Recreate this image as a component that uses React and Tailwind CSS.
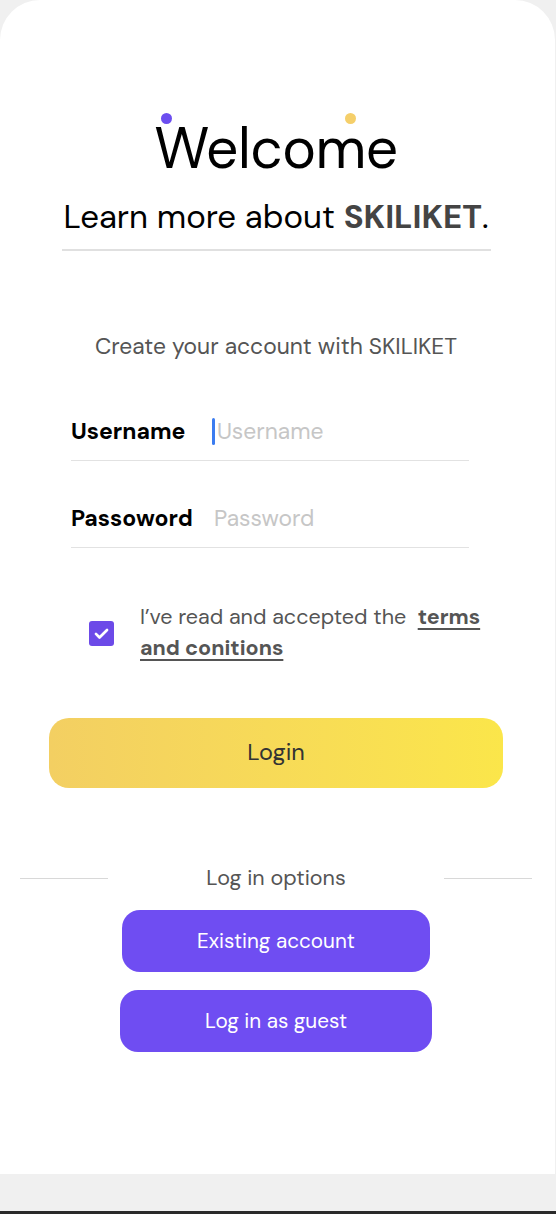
import { useState } from 'react'

const font = { fontFamily: '"DM Sans", Inter, "Noto Sans", sans-serif' }

function Field({ label, placeholder, type = 'text', caret = false, labelWidth }) {
  return (
    <div className="flex items-center border-b border-[#e2e2e2] pt-[43px] pb-[15px]">
      <span className={`${labelWidth} text-[23px] font-bold leading-[28px] text-black`}>{label}</span>
      <div className="flex flex-1 items-center">
        {caret && <span className="mr-[2px] h-[27px] w-[3px] rounded-sm bg-[#3b7cf0]"></span>}
        <input
          type={type}
          placeholder={placeholder}
          className="w-full bg-transparent text-[22.8px] leading-[28px] text-[#333] placeholder:text-[#c6c6c6] focus:outline-none"
        />
      </div>
    </div>
  )
}

export default function App() {
  const [accepted, setAccepted] = useState(true)

  return (
    <div className="flex h-[1214px] w-full flex-col bg-[#f0f0f0]" style={font}>
      <div className="flex h-[1174px] w-[555px] flex-col items-center rounded-t-[40px] bg-white pr-[3px]">
        {/* Title */}
        <div className="relative mt-[113px]">
          <span className="absolute left-[7px] top-[0px] h-[11px] w-[11px] rounded-full bg-[#6c4ef0]"></span>
          <span className="absolute left-[191px] top-[0px] h-[11px] w-[11px] rounded-full bg-[#f5cf6a]"></span>
          <h1 className="pt-[5px] text-[57px] font-normal leading-[62px] tracking-[-0.5px] text-black">Welcome</h1>
        </div>
        <p className="mt-[17px] text-[33px] leading-[40px] text-black">
          Learn more about <span className="font-bold text-[#444]">SKILIKET</span>.
        </p>
        <div className="mt-[12px] h-[2px] w-[429px] bg-[#e0e0e0]"></div>

        {/* Form */}
        <p className="mt-[81px] text-[22.8px] leading-[28px] text-[#555]">Create your account with SKILIKET</p>
        <div className="mt-[14px] ml-[71px] w-[398px] self-start">
          <Field label="Username" placeholder="Username" caret labelWidth="w-[141px]" />
          <Field label="Passoword" placeholder="Password" type="password" labelWidth="w-[143px]" />
        </div>

        <div className="mt-[54px] ml-[89px] flex items-start self-start">
          <button
            onClick={() => setAccepted(!accepted)}
            className={`mt-[19px] flex h-[25px] w-[25px] shrink-0 items-center justify-center rounded-[3px] ${accepted ? 'bg-[#6c4ae8]' : 'border border-gray-400 bg-white'}`}
          >
            {accepted && (
              <svg viewBox="0 0 24 24" className="h-[19px] w-[19px]" fill="none" stroke="white" strokeWidth={3.4} strokeLinecap="round" strokeLinejoin="round">
                <path d="M5 12.5l4.5 4.5L19 7.5" />
              </svg>
            )}
          </button>
          <div className="ml-[26px] flex flex-col text-[21.5px] leading-[31px] text-[#555]">
            <p>
              I’ve read and accepted the{'\u00a0 '}
              <a href="#" className="font-bold text-[#555] underline underline-offset-[4px]">terms</a>
            </p>
            <a href="#" className="self-start font-bold text-[#555] underline underline-offset-[4px]">
              and conitions
            </a>
          </div>
        </div>

        <button className="mt-[54px] h-[70px] w-[454px] rounded-[20px] bg-gradient-to-r from-[#f3cf62] to-[#fbe64a] text-[23.5px] text-[#333]">
          Login
        </button>

        {/* Options */}
        <div className="mt-[75px] flex w-[512px] items-center justify-between">
          <div className="h-[1px] w-[88px] bg-[#d8d8d8]"></div>
          <span className="text-[21.5px] leading-[30px] text-[#555]">Log in options</span>
          <div className="h-[1px] w-[88px] bg-[#d8d8d8]"></div>
        </div>
        <button className="mt-[17px] h-[62px] w-[308px] rounded-[18px] bg-[#6f4df2] text-[20.7px] text-white">
          Existing account
        </button>
        <button className="mt-[18px] h-[62px] w-[312px] rounded-[18px] bg-[#6f4df2] text-[20.7px] text-white">
          Log in as guest
        </button>
      </div>
      <div className="flex-1"></div>
      <div className="h-[3px] w-full bg-[#2a2a2a]"></div>
    </div>
  )
}
